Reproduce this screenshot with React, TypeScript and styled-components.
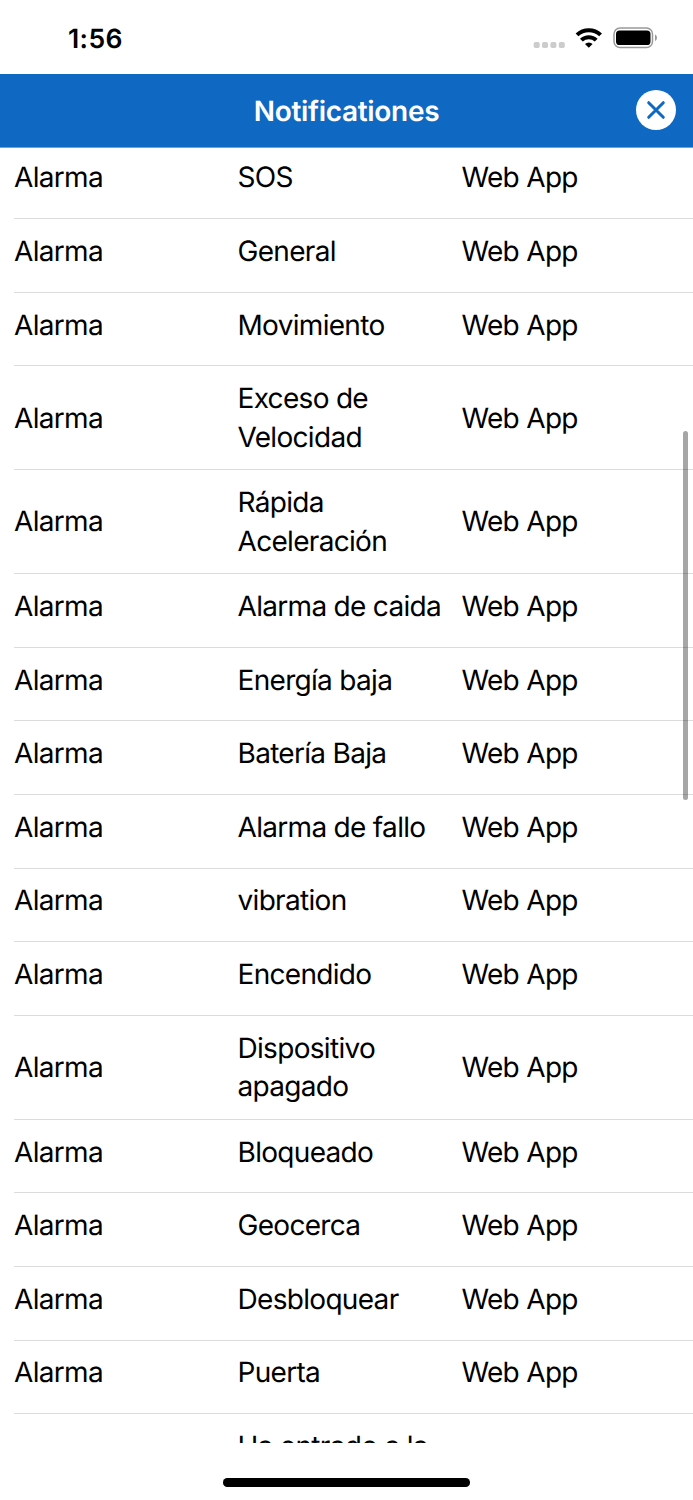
import React from 'react';
import styled, { createGlobalStyle } from 'styled-components';

const Global = createGlobalStyle`
  * { box-sizing: border-box; }
  body { margin: 0; background: #fff; overflow: hidden; }
`;

const Screen = styled.div`
  position: relative;
  display: flex;
  flex-direction: column;
  width: 693px;
  height: 1500px;
  overflow: hidden;
  background: #fff;
  color: #000;
  font-family: Inter, "Liberation Sans", sans-serif;
  text-rendering: geometricPrecision;
`;

const StatusBar = styled.div`
  flex: none;
  height: 74px;
  display: flex;
  align-items: center;
  justify-content: space-between;
  padding: 2px 36px 0 68px;
`;

const Clock = styled.span`
  padding-top: 2px;
  font-size: 26.5px;
  font-weight: 600;
  letter-spacing: 0.4px;
`;

const Indicators = styled.div`
  display: flex;
  align-items: center;
`;

const Header = styled.header`
  flex: none;
  height: 73px;
  display: grid;
  grid-template-columns: 1fr auto 1fr;
  align-items: center;
  padding: 0 17px;
  background: #0f69c2;
  box-shadow: 0 1px 0 #6ba3da;
  color: #fff;
`;

const Title = styled.h1`
  grid-column: 2;
  margin: 0;
  padding-top: 1px;
  font-size: 28px;
  font-weight: 590;
  letter-spacing: -0.32px;
`;

const CloseButton = styled.button`
  grid-column: 3;
  justify-self: end;
  width: 40px;
  height: 40px;
  margin-bottom: 1px;
  padding: 0;
  border: 0;
  border-radius: 50%;
  background: #fff;
  display: flex;
  align-items: center;
  justify-content: center;
`;

const List = styled.main`
  flex: none;
  display: flex;
  flex-direction: column;
  height: 1296px;
  overflow: hidden;
  padding-left: 14px;
`;

const Row = styled.div<{ $tall: boolean }>`
  flex: none;
  height: ${(p) => (p.$tall ? 103.8 : 73.65)}px;
  padding-bottom: ${(p) => (p.$tall ? 0 : 8.4)}px;
  display: grid;
  grid-template-columns: 223.5px 224px 1fr;
  align-items: center;
  border-bottom: 1px solid #dcdcdc;
  font-size: 28px;
  line-height: 38.5px;
  letter-spacing: -0.69px;

  &:first-child {
    margin-top: -1.5px;
  }
`;

const Cell = styled.span`
  white-space: pre-line;
`;

const ScrollThumb = styled.div`
  position: absolute;
  top: 431px;
  right: 5px;
  width: 5px;
  height: 369px;
  border-radius: 3px;
  background: rgba(0, 0, 0, 0.35);
`;

const HomeIndicator = styled.div`
  width: 247.5px;
  height: 8.5px;
  margin: 35px 0 0 222.7px;
  border-radius: 4.25px;
  background: #000;
`;

const names = [
  'SOS', 'General', 'Movimiento', 'Exceso de\nVelocidad', 'Rápida\nAceleración',
  'Alarma de caida', 'Energía baja', 'Batería Baja', 'Alarma de fallo', 'vibration',
  'Encendido', 'Dispositivo\napagado', 'Bloqueado', 'Geocerca', 'Desbloquear', 'Puerta',
];

export default function App() {
  return (
    <Screen>
      <Global />
      <StatusBar>
        <Clock>1:56</Clock>
        <Indicators>
          <svg width="124" height="30" viewBox="533 23 124 30">
            <g fill="#ccc">
              <rect x="533.7" y="42" width="6" height="6" rx="1.8" />
              <rect x="542" y="42" width="6" height="6" rx="1.8" />
              <rect x="550.4" y="42" width="6" height="6" rx="1.8" />
              <rect x="558.8" y="42" width="6" height="6" rx="1.8" />
            </g>
            <g fill="none" stroke="#000" strokeWidth="4">
              <path d="M577 34.900a17 17 0 0 1 23.600 0" />
              <path d="M581.400 40.200a10.500 10.500 0 0 1 14.800 0" />
            </g>
            <path d="M588.800 47.700l-3.800-3.700a5.500 5.500 0 0 1 7.600 0z" />
            <rect x="614" y="28" width="38.500" height="19.500" rx="6" fill="none" stroke="#999" strokeWidth="1.500" />
            <rect x="616" y="30.500" width="34.500" height="14.500" rx="3.600" />
            <path d="M655 34.500c2.600 1 2.600 5.500 0 6.500z" fill="#999" />
          </svg>
        </Indicators>
      </StatusBar>
      <Header>
        <Title>Notificationes</Title>
        <CloseButton aria-label="Cerrar">
          <svg width="20" height="20" viewBox="0 0 20 20" fill="none" stroke="#0f69c2" strokeWidth="3" strokeLinecap="round">
            <path d="M2.700 2.700l14.600 14.600M17.300 2.700l-14.600 14.600" />
          </svg>
        </CloseButton>
      </Header>
      <List>
        {names.map((name) => (
          <Row key={name} $tall={name.includes('\n')}>
            <Cell>Alarma</Cell>
            <Cell>{name}</Cell>
            <Cell>Web App</Cell>
          </Row>
        ))}
        <Row $tall>
          <Cell />
          <Cell>{'Ha entrado a la\n\u00a0'}</Cell>
        </Row>
      </List>
      <ScrollThumb />
      <HomeIndicator />
    </Screen>
  );
}
